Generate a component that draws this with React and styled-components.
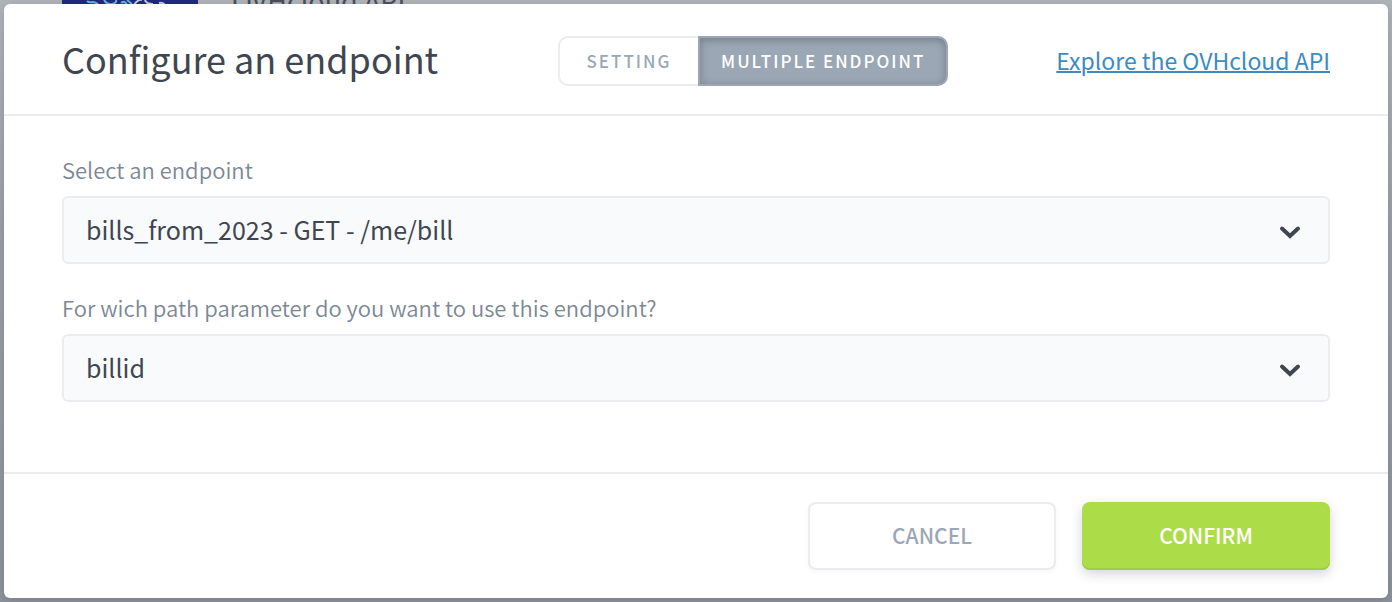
import React, { useState } from "react";
import styled, { createGlobalStyle, css } from "styled-components";

const GlobalStyle = createGlobalStyle`
  *, *::before, *::after { box-sizing: border-box; }
  body {
    margin: 0;
    background: #a4a7ac;
    color: #3f4652;
    font-family: "Noto Sans CJK SC", "Noto Sans", sans-serif;
  }
  button, select { font-family: inherit; }
`;

const Screen = styled.div`
  position: relative;
  min-height: 100vh;
  padding: 4px;
  overflow: hidden;
`;

const PageBehind = styled.div`
  position: absolute;
  inset: 0;
  display: flex;
  align-items: flex-start;
  gap: 34px;
  padding: 0 62px;
  background: linear-gradient(#b0b4b7, #9b9fa4 40%, #8e9299);
`;

const Logo = styled.svg`
  display: block;
  flex: none;
`;

const ServiceName = styled.p`
  margin: -14px 0 0;
  font-size: 27px;
  line-height: 30px;
  color: #4a4f59;
`;

const Modal = styled.section`
  position: relative;
  border-radius: 6px;
  background: #fff;
  box-shadow: 0 2px 8px rgba(40, 46, 58, 0.2);
`;

const Header = styled.header`
  display: flex;
  align-items: center;
  justify-content: space-between;
  padding: 32px 58px 28px;
  border-bottom: 2px solid #ebebf0;
`;

const Title = styled.h1`
  margin: 0;
  padding: 0 12px 6px 0;
  font-size: 36px;
  font-weight: 400;
  line-height: 44px;
  white-space: nowrap;
`;

const Toggle = styled.div`
  display: flex;
`;

const ToggleButton = styled.button`
  min-width: 140px;
  height: 50px;
  padding: 0 21px;
  border: 2px solid #ebebf0;
  border-right-width: 0;
  border-radius: 10px 0 0 10px;
  background: #fff;
  color: #9ba7b5;
  font-size: 17px;
  font-weight: 500;
  line-height: 24px;
  letter-spacing: 2px;
  cursor: pointer;

  &:last-child {
    border-right-width: 2px;
    border-radius: 0 10px 10px 0;
  }

  ${({ $active }) =>
    $active &&
    css`
      border-color: #9ba7b5;
      background: #9ba7b5;
      color: #fff;
      box-shadow: inset 0 2px 8px rgba(0, 0, 0, 0.25);
    `}
`;

const DocLink = styled.a`
  padding-bottom: 2px;
  color: #3d8bc0;
  font-size: 23px;
  line-height: 32px;
  white-space: nowrap;
  text-decoration: underline;
  text-decoration-thickness: 2px;
`;

const Body = styled.div`
  display: flex;
  flex-direction: column;
  gap: 30px;
  padding: 40px 58px 70px;
`;

const Field = styled.div`
  display: flex;
  flex-direction: column;
  gap: 14px;
`;

const Label = styled.label`
  color: #7c8796;
  font-size: 22px;
  font-weight: 350;
  line-height: 26px;
`;

const SelectBox = styled.div`
  display: grid;
  align-items: center;

  & > * { grid-area: 1 / 1; }
`;

const Select = styled.select`
  width: 100%;
  height: 68px;
  padding: 0 72px 2px 22px;
  border: 2px solid #ebecef;
  border-radius: 6px;
  background: #f9fafc;
  color: #3f4652;
  font-size: 25px;
  line-height: 36px;
  appearance: none;
  cursor: pointer;
`;

const Chevron = styled.svg`
  justify-self: end;
  margin: 4px 29px 0 0;
  pointer-events: none;
`;

const Footer = styled.footer`
  display: flex;
  justify-content: flex-end;
  gap: 26px;
  padding: 28px 58px;
  border-top: 2px solid #ebebf0;
`;

const ActionButton = styled.button`
  width: 248px;
  height: 68px;
  padding: 0 0 2px;
  border: 2px solid #ebebf0;
  border-radius: 8px;
  background: #fff;
  color: #9ba7b5;
  font-size: 21px;
  font-weight: 500;
  line-height: 30px;
  box-shadow: 0 2px 4px rgba(40, 46, 58, 0.04);
  cursor: pointer;

  ${({ $primary }) =>
    $primary &&
    css`
      border: 0;
      background: #acdd48;
      color: #fff;
      box-shadow: inset 0 -2px 0 #a0cd43, 0 4px 12px rgba(40, 46, 58, 0.2);
    `}
`;

function SelectField({ id, label, options }) {
  return (
    <Field>
      <Label htmlFor={id}>{label}</Label>
      <SelectBox>
        <Select id={id}>
          {options.map((option) => (
            <option key={option}>{option}</option>
          ))}
        </Select>
        <Chevron width="22" height="14" viewBox="0 0 22 14" fill="none" aria-hidden="true">
          <path d="M3 3.5l8 7.5L19 3.5" stroke="#3f4652" strokeWidth="4" strokeLinecap="round" />
        </Chevron>
      </SelectBox>
    </Field>
  );
}

const tabs = ["SETTING", "MULTIPLE ENDPOINT"];

export default function App() {
  const [tab, setTab] = useState(tabs[1]);
  return (
    <Screen>
      <GlobalStyle />
      <PageBehind aria-hidden="true">
        <Logo width="136" height="8" viewBox="0 0 136 8">
          <rect width="136" height="8" fill="#1f2a80" />
          <path d="M25 1q2 2 6 1q5 1 6 4M42 0q3 5 8 4q5-1 4-4M59 3q4-3 6 2M65 0l5 4" fill="none" stroke="#69b3df" strokeWidth="2" />
          <path d="M72 5q4-6 8-5M83 0q1 4 8 4M97 3q4-1 6 2" fill="none" stroke="#c3cee4" strokeWidth="2" />
        </Logo>
        <ServiceName>OVHcloud API</ServiceName>
      </PageBehind>
      <Modal role="dialog" aria-labelledby="dialog-title">
        <Header>
          <Title id="dialog-title">Configure an endpoint</Title>
          <Toggle>
            {tabs.map((name) => (
              <ToggleButton
                key={name}
                type="button"
                $active={name === tab}
                aria-pressed={name === tab}
                onClick={() => setTab(name)}
              >
                {name}
              </ToggleButton>
            ))}
          </Toggle>
          <DocLink href="#api">Explore the OVHcloud API</DocLink>
        </Header>
        <Body>
          <SelectField
            id="endpoint"
            label="Select an endpoint"
            options={["bills_from_2023 - GET - /me/bill"]}
          />
          <SelectField
            id="path-parameter"
            label="For wich path parameter do you want to use this endpoint?"
            options={["billid"]}
          />
        </Body>
        <Footer>
          <ActionButton type="button">CANCEL</ActionButton>
          <ActionButton type="button" $primary>CONFIRM</ActionButton>
        </Footer>
      </Modal>
    </Screen>
  );
}
